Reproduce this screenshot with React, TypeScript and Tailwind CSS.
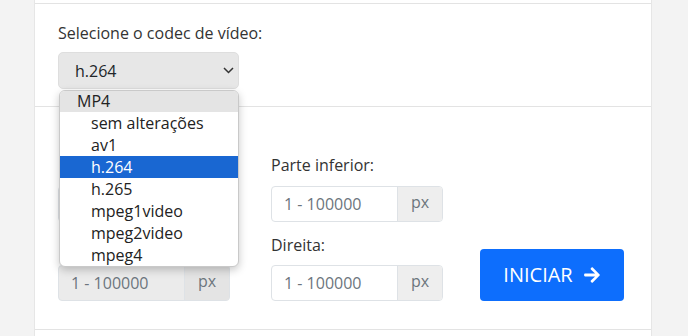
import React from 'react';
import { FaArrowRight } from 'react-icons/fa';

const codecs = ['sem alterações', 'av1', 'h.264', 'h.265', 'mpeg1video', 'mpeg2video', 'mpeg4'];

function PxInput({ disabled, covered }: { disabled?: boolean; covered?: boolean }) {
  return (
    <div className={`flex h-[36px] w-[172px] rounded-[4px] border border-[#dee2e6] overflow-hidden ${disabled ? 'bg-[#ebebeb]' : 'bg-white'}`}>
      <div className="w-[125px] pl-[12px] flex items-center text-[16px] text-[#6c757d]">{covered ? '' : '1 - 100000'}</div>
      <div className={`flex-1 flex items-center justify-center border-l border-[#dee2e6] text-[16px] text-[#6c757d] pb-[4px] ${disabled ? 'bg-[#e4e4e4]' : 'bg-[#eeeeee]'}`}>{covered ? '' : 'px'}</div>
    </div>
  );
}

export default function App() {
  return (
    <div className="min-h-screen bg-[#f3f3f3] font-['Open_Sans',sans-serif] text-[#212529]">
      <div className="relative ml-[34px] w-[618px] h-[336px] bg-white border-x border-[#e6e6e6]">
        <div className="h-[3px]"></div>

        {/* codec */}
        <section className="border-t border-[#e3e3e3] px-[23px] pt-[17px] pb-[17px]">
          <div className="text-[16px] leading-[24px] text-[#333]">Selecione o codec de vídeo:</div>
          <div className="mt-[7px] w-[181px] h-[37px] rounded-[5px] bg-[#e7e7e7] border border-[#dedede] flex items-center justify-between pl-[16px] pr-[4px]">
            <span className="text-[16px] text-[#212529]">h.264</span>
            <svg width="11" height="7" viewBox="0 0 11 7" fill="none" stroke="#333" strokeWidth="1.5">
              <polyline points="1,1 5.5,5.5 10,1" />
            </svg>
          </div>
        </section>

        {/* recorte: a coluna esquerda fica sob a lista aberta */}
        <section className="border-t border-[#e3e3e3] px-[23px] pt-[46px] pb-[28px]">
          <div className="grid grid-cols-[213px_209px_144px] gap-y-[11px] text-[16px] leading-[24px] text-[#333]">
            <div>
              <div className="mb-[9px] h-[24px]"></div>
              <PxInput covered />
            </div>
            <div>
              <div className="mb-[9px]">Parte inferior:</div>
              <PxInput />
            </div>
            <div></div>
            <div>
              <div className="mb-[8px] h-[24px]"></div>
              <PxInput disabled />
            </div>
            <div>
              <div className="mb-[8px]">Direita:</div>
              <PxInput />
            </div>
            <div className="self-end">
              <button className="w-[144px] h-[52px] rounded-[4px] bg-[#0d6efd] text-white text-[20px] flex items-center justify-center gap-[10px]">
                INICIAR <FaArrowRight size={18} />
              </button>
            </div>
          </div>
        </section>

        <div className="border-t border-[#e3e3e3]"></div>

        {/* lista aberta do select */}
        <div className="absolute left-[24px] top-[90px] w-[180px] rounded-[6px] border border-[#c9c9c9] bg-white shadow-[0_3px_8px_rgba(0,0,0,0.22)] overflow-hidden text-[16px] leading-[22px] text-[#222]">
          <div className="bg-[#e4e4e4] pl-[17px] h-[21px] leading-[21px]">MP4</div>
          {codecs.map((c) => (
            <div key={c} className={`pl-[31px] h-[22px] ${c === 'h.264' ? 'bg-[#1967d2] text-white' : ''}`}>{c}</div>
          ))}
        </div>
      </div>
    </div>
  );
}
